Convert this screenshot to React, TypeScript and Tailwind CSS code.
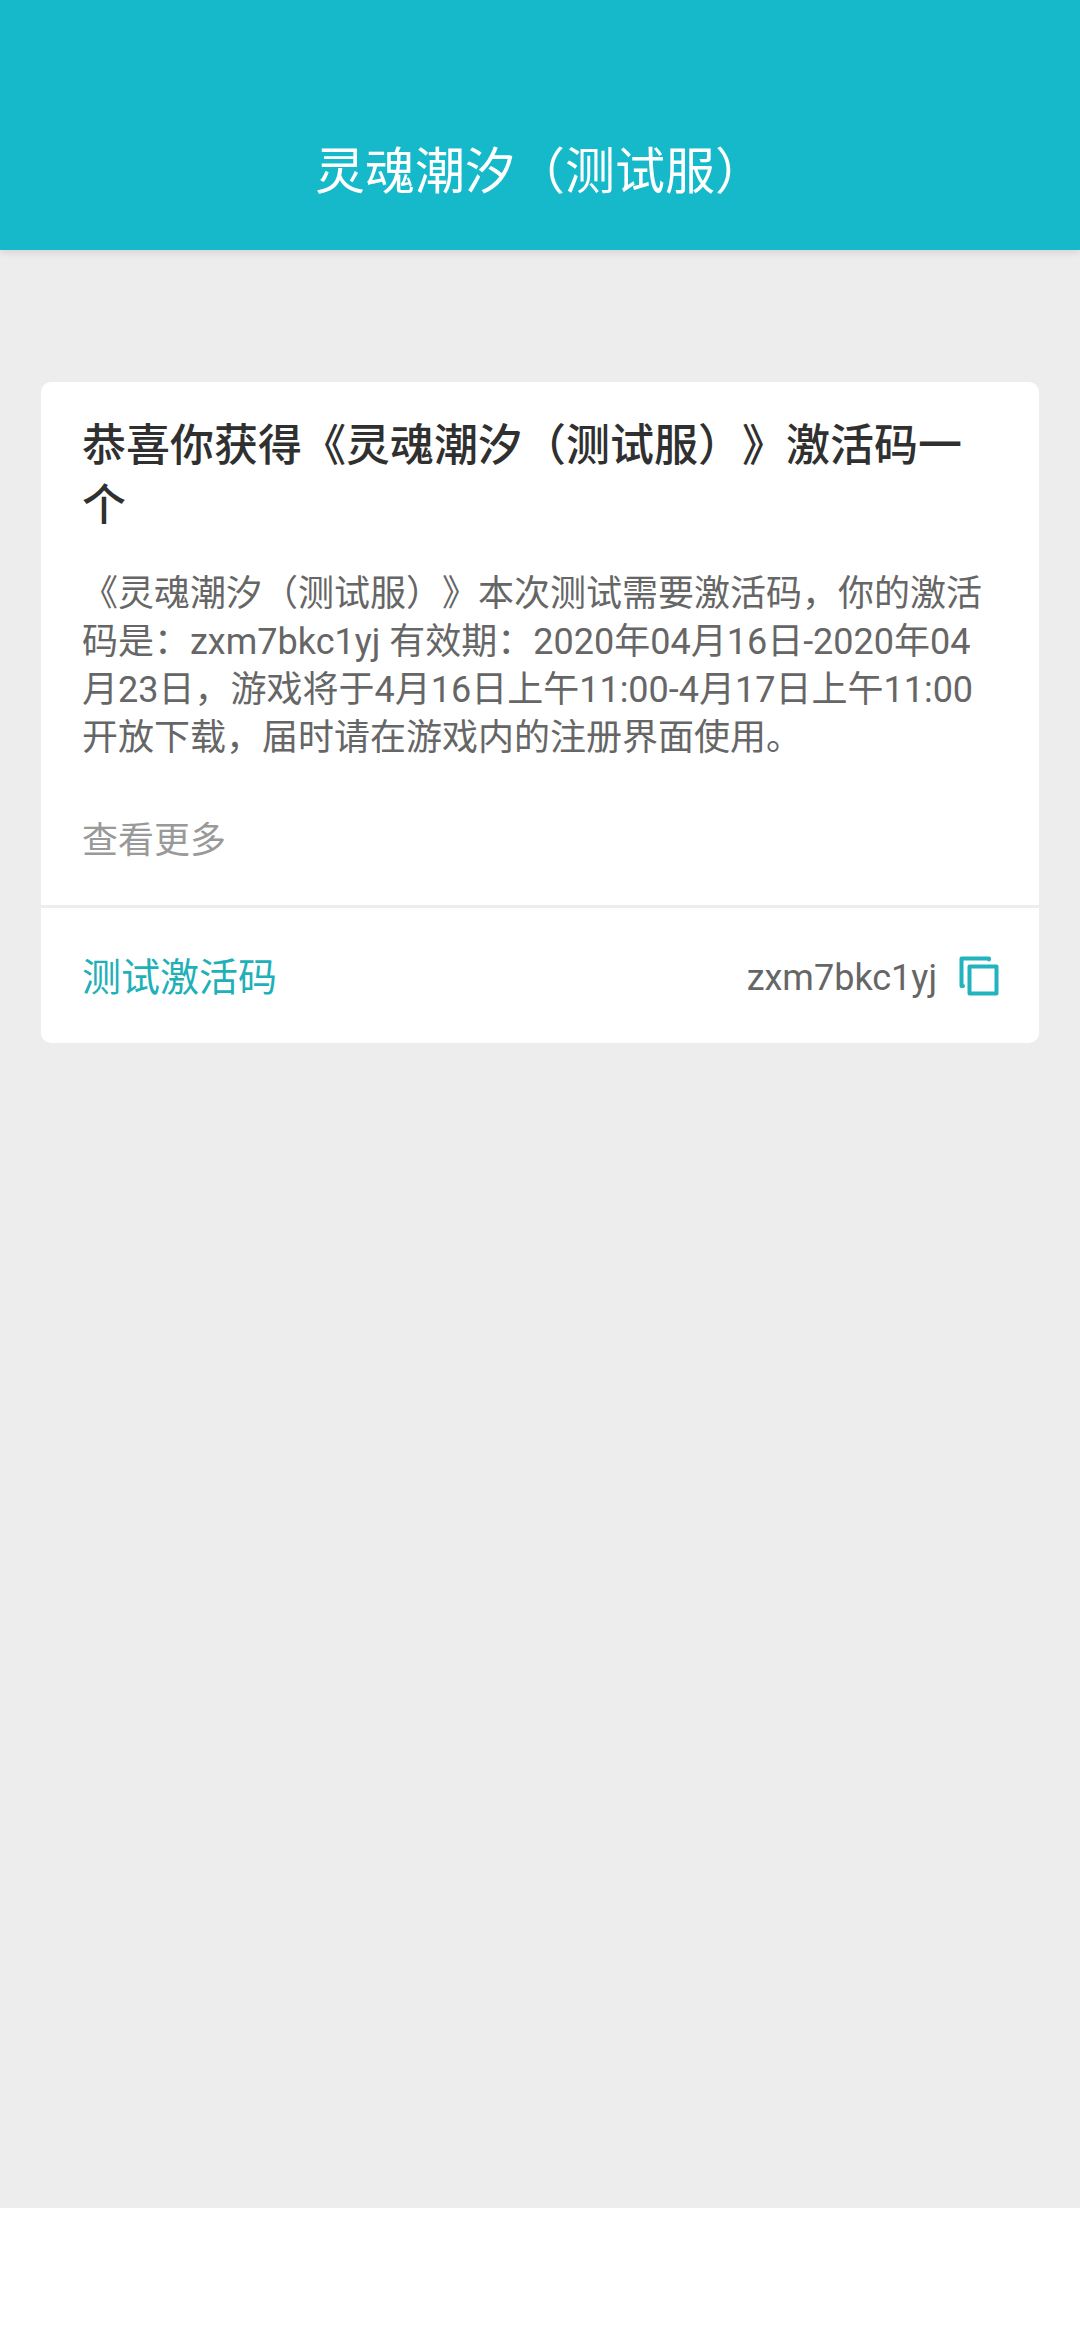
import { useState } from "react";

const CODE = "zxm7bkc1yj";

const message = {
  title: "恭喜你获得《灵魂潮汐（测试服）》激活码一个",
  body: `《灵魂潮汐（测试服）》本次测试需要激活码，你的激活码是：${CODE} 有效期：2020年04月16日-2020年04月23日，游戏将于4月16日上午11:00-4月17日上午11:00开放下载，届时请在游戏内的注册界面使用。`,
};

function CopyIcon() {
  return (
    <svg className="w-10 h-10" viewBox="0 0 40 40" fill="none" stroke="currentColor" strokeWidth="4" strokeLinecap="round" strokeLinejoin="round" aria-hidden="true">
      <path d="M30 3.5V2.5H2.5V30H4" />
      <path d="M10.5 10.5H37.5V37.5H10.5Z" />
    </svg>
  );
}

function CodeCard() {
  const [expanded, setExpanded] = useState(false);

  return (
    <article className="mx-[41px] bg-white rounded-[10px]">
      <div className="px-[41px] pt-[34px] pb-10 border-b-[3px] border-[#ededed]">
        <h2 className="text-[44px] leading-[60px] font-medium text-[#303030]">
          {message.title}
        </h2>
        <p className={expanded ? "mt-[34px] text-[36px] leading-[48px] text-[#666666]" : "mt-[34px] text-[36px] leading-[48px] text-[#666666] line-clamp-4"}>
          {message.body}
        </p>
        <button
          type="button"
          onClick={() => setExpanded(!expanded)}
          className="block mt-[55px] text-[36px] leading-[48px] text-[#999999]"
        >
          查看更多
        </button>
      </div>
      <div className="flex items-center justify-between pl-[41px] pr-10 h-[135px]">
        <span className="pt-1 text-[39px] leading-[48px] text-[#1fb0b8]">测试激活码</span>
        <div className="flex items-center gap-[22px]">
          <span className="pt-1 text-[36px] leading-[48px] text-[#666666]">{CODE}</span>
          <button
            type="button"
            aria-label="复制激活码"
            onClick={() => navigator.clipboard?.writeText(CODE)}
            className="text-[#22b3be]"
          >
            <CopyIcon />
          </button>
        </div>
      </div>
    </article>
  );
}

export default function App() {
  return (
    <div
      lang="zh-CN"
      className="min-h-screen flex flex-col bg-white font-[Roboto,'Noto_Sans_CJK_SC',sans-serif] [text-spacing-trim:space-all]"
    >
      <header className="relative bg-[#15b9c9] pt-[142px] pb-12 shadow-[0_2px_8px_rgba(0,0,0,0.12)]">
        <h1 className="text-center text-[50px] leading-[60px] text-white">灵魂潮汐（测试服）</h1>
      </header>
      <main className="flex-1 bg-[#ededed] pt-[132px] pb-12">
        <CodeCard />
      </main>
      <footer className="h-[132px] bg-white" />
    </div>
  );
}
